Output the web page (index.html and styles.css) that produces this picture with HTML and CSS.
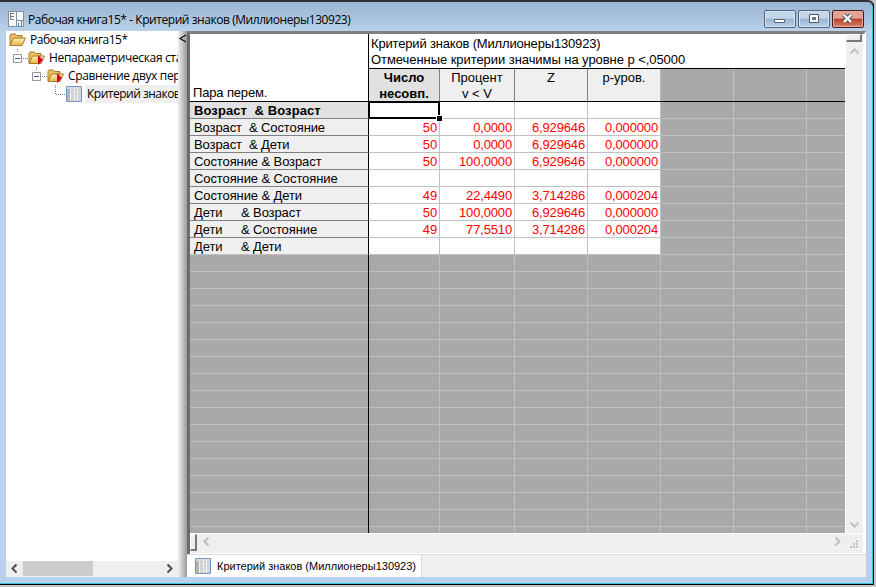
FILE: index.html
```html
<!DOCTYPE html>
<html lang="ru">
<head>
<meta charset="utf-8">
<title>Рабочая книга15*</title>
<link rel="stylesheet" href="styles.css">
</head>
<body>
<svg class="defs" width="0" height="0">
  <defs>
    <linearGradient id="fold" x1="0" y1="0" x2="0" y2="1"><stop offset="0" stop-color="#fff0b4"/><stop offset="1" stop-color="#e5b348"/></linearGradient>
    <symbol id="folder" viewBox="0 0 17 14">
      <path d="M1 12V2.500L2 1h4l1.500 1.500H13V5" fill="#e9c066" stroke="#a87b26"/>
      <path d="M1 12.500L4.500 5h12L13 12.500z" fill="url(#fold)" stroke="#a87b26"/>
    </symbol>
    <symbol id="sheet" viewBox="0 0 16 16">
      <path d="M.5.5h15v15H.5z" fill="#f4f4f4" stroke="#7397c5"/>
      <path d="M1 1h14v2H1z" fill="#dcdcdc"/><path d="M1 3h3v12H1z" fill="#b4b4b4"/>
      <path d="M5 3h3v12H5zM9 3h2v12H9zM12 3h3v12h-3z" fill="#cfcfd4"/>
      <path d="M4 6.500h11M4 9.500h11M4 12.500h11" stroke="#e6e6e6" stroke-opacity=".6"/>
    </symbol>
  </defs>
</svg>
<div class="window">
  <header class="titlebar">
    <svg class="app-icon" width="17" height="16" viewBox="0 0 17 16">
      <path d="M.5.5h8v15h-8zM8.500.5h7v9h-7zM8.500 9.500h7v6h-7z" fill="#f7f7f7" stroke="#858d96"/>
      <path d="M2.500 2v6M2.500 2.500H6M2.500 5.500H6M2.500 8.500H6" stroke="#777" fill="none"/>
      <path d="M10.500 15v-3M13.500 15v-5" stroke="#3684c5"/>
    </svg>
    <h1 class="title">Рабочая книга15* - Критерий знаков (Миллионеры130923)</h1>
    <div class="controls">
      <span class="btn"><svg width="30" height="16"><path d="M9.500 8.500h10v3h-10z" fill="#fff" stroke="#5a6474"/></svg></span>
      <span class="btn"><svg width="30" height="16"><path d="M10.500 3.500h9v8h-9z" fill="#fff" stroke="#4f5a6b"/><path d="M13.500 6.500h3v2h-3z" fill="#8bacd5" stroke="#4f5a6b"/></svg></span>
      <span class="btn close"><svg width="30" height="16"><path d="M11 4l7 7M18 4l-7 7" stroke="#54545e" stroke-width="4.500"/><path d="M11 4l7 7M18 4l-7 7" stroke="#fff" stroke-width="2.400"/></svg></span>
    </div>
  </header>
  <main class="content">
    <aside class="nav">
      <div class="tree">
        <div class="node root"><svg width="17" height="14"><use href="#folder"/></svg><span>Рабочая книга15*</span></div>
        <div class="node l1"><svg width="46" height="18"><path d="M11.500 0v4M17 9.500h5" stroke="#808080" stroke-dasharray="1 1"/><path d="M7.500 5.500h8v8h-8z" fill="#fff" stroke="#969696"/><path d="M9 9.500h5" stroke="#3b62ae"/><use href="#folder" x="22" y="2" width="17" height="14"/><path d="M32 6l5 5-5 5z" fill="#d8002c"/></svg><span>Непараметрическая статистика</span></div>
        <div class="node l2"><svg width="46" height="18"><path d="M11.500 0v4M17 9.500h5" stroke="#808080" stroke-dasharray="1 1"/><path d="M7.500 5.500h8v8h-8z" fill="#fff" stroke="#969696"/><path d="M9 9.500h5" stroke="#3b62ae"/><use href="#folder" x="22" y="2" width="17" height="14"/><path d="M32 6l5 5-5 5z" fill="#d8002c"/></svg><span>Сравнение двух переменных</span></div>
        <div class="node l3"><svg width="46" height="18"><path d="M11.500 0v9.500H22" fill="none" stroke="#808080" stroke-dasharray="1 1"/><use href="#sheet" x="22" y="1" width="16" height="16"/></svg><span class="current">Критерий знаков</span></div>
      </div>
      <div class="nav-scroll">
        <svg width="17" height="15"><path d="M10.500 3.500l-4 4 4 4" fill="none" stroke="#505050" stroke-width="2"/></svg>
        <i class="thumb"></i>
        <svg width="17" height="15"><path d="M6.500 3.500l4 4-4 4" fill="none" stroke="#505050" stroke-width="2"/></svg>
      </div>
    </aside>
    <div class="splitter"><svg width="9" height="14"><path d="M8 4L2 7.500 8 11" fill="none" stroke="#111" stroke-width="1.300"/></svg></div>
    <section class="pane">
      <div class="frame">
        <div class="sheet">
          <div class="head">
            <div class="corner">Пара перем.</div>
            <div class="caption"><span class="c1">Критерий знаков (Миллионеры130923)</span><span class="c2">Отмеченные критерии значимы на уровне p &lt;,05000</span></div>
            <div class="cols">
              <div class="col active">Число<br>несовп.</div><div class="col">Процент<br>v &lt; V</div><div class="col">Z</div><div class="col last">p-уров.</div><div class="void"></div>
            </div>
          </div>
          <div class="rows">
            <div class="row"><b class="name bold">Возраст  &amp; Возраст</b><span class="selected"></span><span></span><span></span><span></span></div>
            <div class="row"><b class="name">Возраст  &amp; Состояние</b><span>50</span><span>0,0000</span><span>6,929646</span><span>0,000000</span></div>
            <div class="row"><b class="name">Возраст  &amp; Дети</b><span>50</span><span>0,0000</span><span>6,929646</span><span>0,000000</span></div>
            <div class="row"><b class="name">Состояние &amp; Возраст</b><span>50</span><span>100,0000</span><span>6,929646</span><span>0,000000</span></div>
            <div class="row"><b class="name">Состояние &amp; Состояние</b><span></span><span></span><span></span><span></span></div>
            <div class="row"><b class="name">Состояние &amp; Дети</b><span>49</span><span>22,4490</span><span>3,714286</span><span>0,000204</span></div>
            <div class="row"><b class="name">Дети     <i>&amp; Возраст</i></b><span>50</span><span>100,0000</span><span>6,929646</span><span>0,000000</span></div>
            <div class="row"><b class="name">Дети     <i>&amp; Состояние</i></b><span>49</span><span>77,5510</span><span>3,714286</span><span>0,000204</span></div>
            <div class="row"><b class="name">Дети     <i>&amp; Дети</i></b><span></span><span></span><span></span><span></span></div>
          </div>
          <div class="blank"><div class="blank-names"></div></div>
        </div>
        <div class="vscroll">
          <i class="split-h"></i>
          <svg width="17" height="17"><path d="M4.500 11.500l4-4 4 4" fill="none" stroke="#bfbfbf" stroke-width="2"/></svg>
          <svg class="down" width="17" height="17"><path d="M4.500 6.500l4 4 4-4" fill="none" stroke="#bfbfbf" stroke-width="2"/></svg>
        </div>
        <div class="hscroll">
          <i class="split-v"></i>
          <svg width="17" height="17"><path d="M11.500 3.500l-4 4 4 4" fill="none" stroke="#bfbfbf" stroke-width="2"/></svg>
          <svg class="right" width="17" height="17"><path d="M7.500 3.500l4 4-4 4" fill="none" stroke="#bfbfbf" stroke-width="2"/></svg>
          <svg class="grip" width="9" height="9"><path d="M6 0h2v2H6zM3 3h2v2H3zM6 3h2v2H6zM0 6h2v2H0zM3 6h2v2H3zM6 6h2v2H6z" fill="#bfbfbf"/></svg>
        </div>
      </div>
      <div class="tabs"><div class="tab"><svg width="16" height="16"><use href="#sheet"/></svg><span>Критерий знаков (Миллионеры130923)</span></div></div>
    </section>
  </main>
</div>
</body>
</html>
```
FILE: styles.css
```css
* { box-sizing: border-box; }
body { margin: 0; width: 876px; height: 587px; overflow: hidden; background: #c6c6c6; font: 13px/16px "Liberation Sans", Arial, sans-serif; color: #000; }
.defs { position: absolute; }
svg { display: block; flex: none; }
.window { width: 874px; height: 585px; border-top: 2px solid #303034; border-right: 1px solid #000; border-bottom: 1px solid #000; border-radius: 0 6px 0 0; background: #000; display: flex; flex-direction: column; }
.titlebar { height: 29px; flex: none; padding: 0 8px; display: flex; align-items: center; border-right: 1px solid #35c5e0; background: linear-gradient(#99b4d1, #b9d1ea); border-radius: 0 5px 0 0; }
.app-icon { margin-top: 4px; }
.title { margin: 6px 0 0 3px; font: 12px/18px "Open Sans", "Noto Sans", sans-serif; letter-spacing: -.44px; white-space: nowrap; }
.controls { margin-left: auto; display: flex; gap: 2px; padding-top: 5px; }
.btn { width: 32px; height: 18px; border: 1px solid #53657c; border-radius: 2px; background: linear-gradient(#c3d5e9 45%, #98b4d2 50%, #b8d0e8); box-shadow: inset 0 0 0 1px #d5e3f1; }
.close { border-color: #4b1520; background: linear-gradient(#e3a395 45%, #bb402a 50%, #d48368); box-shadow: inset 0 0 0 1px #e5aaa0; }
.content { flex: 1; display: flex; padding: 0 6px 6px; background: #b9d1ea; border-right: 1px solid #35c5e0; border-bottom: 1px solid #35c5e0; min-height: 0; }
.nav { width: 172px; background: #fff; display: flex; flex-direction: column; overflow: hidden; }
.tree { flex: 1; font: 12px/18px "Open Sans", "Noto Sans", sans-serif; letter-spacing: -.5px; white-space: nowrap; }
.node { height: 18px; display: flex; align-items: center; }
.root { padding-left: 3px; gap: 4px; }
.l1 span, .l2 span { margin-left: -3px; letter-spacing: -.35px; }
.l2 { padding-left: 19px; }
.l3 { padding-left: 38px; }
.l3 .current { margin-left: -5px; padding-left: 2px; flex: 1; background: #efefef; }
.nav-scroll { height: 16px; background: #efefef; display: flex; }
.thumb { width: 70px; background: #cbcbcb; margin-right: 68px; height: 15px; }
.splitter { width: 9px; background: linear-gradient(90deg, #f0f0f0, #9a9a9a); }
.pane { flex: 1; display: flex; flex-direction: column; min-width: 0; }
.frame { height: 523px; border: solid #6b6b6b; border-width: 3px 0 0 3px; border-top-color: #808080; display: grid; grid-template: 499px 21px / 655px 1fr; background: #efefef; box-shadow: inset -1px -1px #fff, inset 1px 0 #fff; border-right: 2px solid #fff; }
.sheet { background: #a9a9a9; display: flex; flex-direction: column; overflow: hidden; }
.head { height: 68px; flex: none; display: grid; grid-template: 35px 33px / 179px 1fr; }
.corner { grid-row: 1 / 3; background: #fff; border-right: 1px solid #000; border-bottom: 1px solid #000; display: flex; align-items: flex-end; padding-left: 3px; letter-spacing: -.15px; }
.caption { background: #fff; border-bottom: 1px solid #000; padding: 2px 0 0 2px; display: flex; flex-direction: column; white-space: nowrap; }
.c1 { letter-spacing: -.17px; }
.c2 { letter-spacing: -.06px; }
.cols { display: grid; grid-template: 32px / 71px 75px 73px 73px 1fr; border-bottom: 1px solid #000; text-align: center; }
.col { background: #efefef; border-right: 1px solid #808080; padding-top: 1px; height: 32px; }
.col.last { border-right-color: #b8b8b8; }
.col.active { background: #e1e1e1; font-weight: bold; }
.void { background: linear-gradient(90deg, transparent 72px, #c0c0c0 72px 73px, transparent 73px 145px, #c0c0c0 145px 146px, transparent 146px); }
.rows, .blank { background: linear-gradient(90deg, transparent 249px, #c0c0c0 249px 250px, transparent 250px 324px, #c0c0c0 324px 325px, transparent 325px 397px, #c0c0c0 397px 398px, transparent 398px 470px, #c0c0c0 470px 471px, transparent 471px 543px, #c0c0c0 543px 544px, transparent 544px 616px, #c0c0c0 616px 617px, transparent 617px), repeating-linear-gradient(transparent 0 16px, #c0c0c0 16px 17px); }
.row { display: grid; grid-template: 17px / 179px 71px 75px 73px 73px; height: 17px; line-height: 18px; }
.row > span { background: #fff; border: solid #c0c0c0; border-width: 0 1px 1px 0; color: #f00; text-align: right; padding-right: 2px; letter-spacing: -.15px; }
.row > .name { font-weight: normal; background: #efefef; border-right: 1px solid #000; border-bottom: 1px solid #808080; white-space: pre; padding-left: 4px; letter-spacing: -.1px; }
.row:last-child > .name { border-bottom-color: #c0c0c0; }
.row > .name.bold { font-weight: bold; background: #e1e1e1; letter-spacing: .1px; }
.name i { font-style: normal; margin-left: 1px; }
.row > .selected { position: relative; border: solid #000; border-width: 1px 2px 2px 1px; }
.selected::after { content: ""; position: absolute; right: -4px; bottom: -4px; width: 5px; height: 5px; background: #000; outline: 1px solid #fff; z-index: 1; }
.blank { flex: 1; }
.blank-names { height: 100%; width: 179px; border-right: 1px solid #000; }
.vscroll { display: flex; flex-direction: column; align-items: flex-start; border-left: 1px solid #fff; }
.split-h { width: 16px; height: 8px; border: 1px solid #fff; border-right: 2px solid #777; border-bottom: 2px solid #777; }
.down, .right { margin-top: auto; }
.hscroll { grid-column: 1 / 3; display: flex; align-items: flex-start; border-top: 1px solid #fff; }
.split-v { width: 7px; height: 17px; border: 1px solid #fff; border-right: 2px solid #777; border-bottom: 2px solid #777; }
.right { margin: 0 5px 0 auto; }
.grip { margin: 6px 5px 0 0; }
.tabs { flex: 1; background: #efefef; border-top: 1px solid #dcdcdc; display: flex; }
.tab { background: #fff; border-right: 1px solid #d8d8d8; width: 235px; padding-left: 8px; display: flex; align-items: center; gap: 6px; font-size: 11px; white-space: nowrap; }
```
